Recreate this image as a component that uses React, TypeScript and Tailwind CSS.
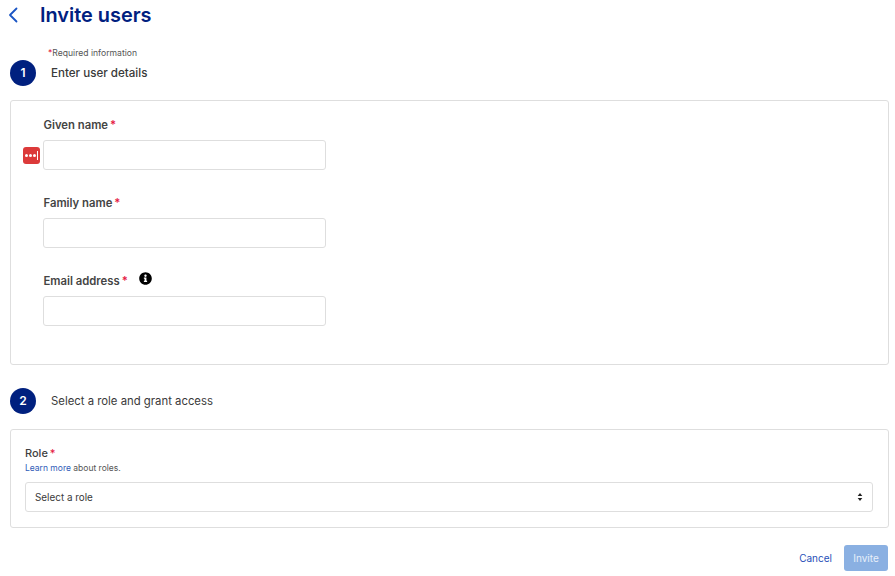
function Star({ className = "" }: { className?: string }) {
  return <span className={`text-[#e5173f] ${className}`}>*</span>;
}

function Step({ n, title, className }: { n: number; title: string; className: string }) {
  return (
    <div className="flex h-[26px] items-center">
      <div className="flex h-[26px] w-[26px] items-center justify-center rounded-full bg-[#00207f] text-[12px] font-semibold text-white">
        {n}
      </div>
      <div className={`ml-[15px] pt-[1px] text-[#3a3a3a] ${className}`}>{title}</div>
    </div>
  );
}

function Field({ label, info, badge }: { label: string; info?: boolean; badge?: boolean }) {
  return (
    <div className="w-[283px]">
      <div className="flex h-[16px] items-center pt-[1px] pl-[0.5px] text-[11.3px] font-semibold leading-4 text-[#444]">
        {label}
        <Star className="ml-[2px]" />
        {info && (
          <svg viewBox="0 0 512 512" className="mb-[4px] ml-[11px] h-[13px] w-[13px]" fill="#000">
            <path d="M256 8C119 8 8 119 8 256s111 248 248 248 248-111 248-248S393 8 256 8zm0 90c26 0 47 21 47 47s-21 47-47 47-47-21-47-47 21-47 47-47zm64 282c0 7-5 12-12 12H204c-7 0-12-5-12-12v-28c0-7 5-12 12-12h16v-76h-16c-7 0-12-5-12-12v-28c0-7 5-12 12-12h76c7 0 12 5 12 12v116h16c7 0 12 5 12 12v28z" />
          </svg>
        )}
      </div>
      <div className="relative mt-[8px]">
        <input className="block h-[30px] w-full rounded-[3px] border border-[#dedede] bg-white" />
        {badge && (
          <div className="absolute left-[-20px] top-[7px] flex h-[17px] w-[17px] items-center justify-center gap-[1px] rounded-[3px] bg-[#dc3a3a]">
            <span className="h-[3px] w-[3px] rounded-full bg-white" />
            <span className="h-[3px] w-[3px] rounded-full bg-white" />
            <span className="h-[3px] w-[3px] rounded-full bg-white" />
            <span className="h-[9px] w-[1px] bg-white" />
          </div>
        )}
      </div>
    </div>
  );
}

export default function App() {
  return (
    <div className="h-[576px] w-[895px] overflow-hidden bg-white font-['Inter','Roboto',sans-serif]">
      <div className="flex h-[31px] items-center">
        <svg viewBox="0 0 10 16" className="mb-[1px] ml-[8px] h-[16px] w-[10px]" fill="none" stroke="#1a55c4" strokeWidth="1.8" strokeLinecap="round" strokeLinejoin="round">
          <path d="M8.5 1.5L2 8l6.5 6.5" />
        </svg>
        <h1 className="ml-[22px] text-[19.9px] font-semibold text-[#00207f]">Invite users</h1>
      </div>

      <div className="ml-[48px] mt-[16px] flex h-[12px] items-center text-[8.6px] text-[#555]">
        <Star />
        Required information
      </div>

      <div className="ml-[10px] mr-[6px] mt-[1px]">
        <Step n={1} title="Enter user details" className="text-[11.6px] font-medium" />

        <div className="mt-[14px] flex h-[265px] flex-col gap-[24px] rounded-[3px] border border-[#dedede] pl-[32px] pt-[15px]">
          <Field label="Given name" badge />
          <Field label="Family name" />
          <Field label="Email address" info />
        </div>

        <div className="mt-[23px]">
          <Step n={2} title="Select a role and grant access" className="text-[11.35px] font-normal" />
        </div>

        <div className="mt-[15px] h-[99px] rounded-[3px] border border-[#dedede] pl-[14px] pr-[15px] pt-[16px]">
          <div className="flex h-[14px] items-center text-[11px] font-medium text-[#3f3f3f]">
            Role
            <Star className="ml-[2px]" />
          </div>
          <div className="mt-[2px] h-[12px] text-[8.5px] leading-3 text-[#555]">
            <a className="text-[#2f5cb8]">Learn more</a> about roles.
          </div>
          <div className="mt-[8px] flex h-[30px] items-center justify-between rounded-[3px] border border-[#dedede] px-[9px] text-[9.9px] text-[#3a3a3a]">
            Select a role
            <svg viewBox="0 0 8 12" className="h-[8px] w-[6px]" fill="#222">
              <path d="M4 0l3.5 4.5h-7zM4 12L.5 7.5h7z" />
            </svg>
          </div>
        </div>

        <div className="mr-[1px] mt-[17px] flex items-center justify-end">
          <a className="text-[10px] text-[#1f4fb8]">Cancel</a>
          <button className="ml-[12px] h-[26px] w-[44px] rounded-[3px] bg-[#8ab0e2] text-[10px] text-white/80">Invite</button>
        </div>
      </div>
    </div>
  );
}
